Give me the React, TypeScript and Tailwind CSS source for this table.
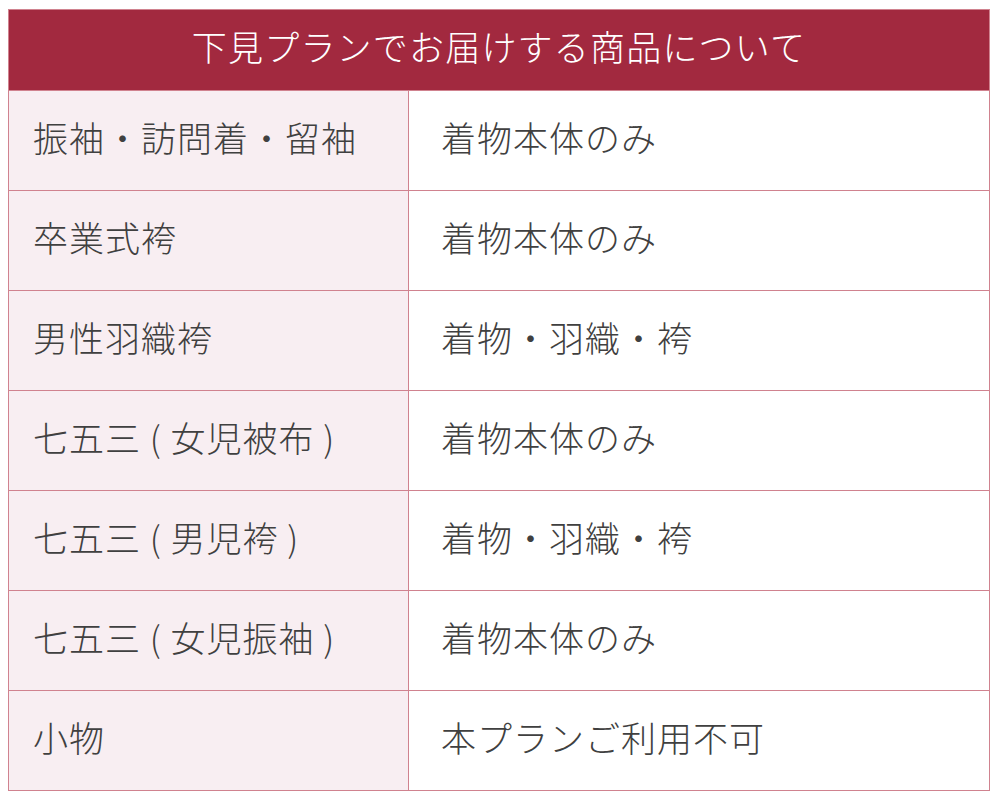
import React from "react";

const rows: [string, string][] = [
  ["振袖・訪問着・留袖", "着物本体のみ"],
  ["卒業式袴", "着物本体のみ"],
  ["男性羽織袴", "着物・羽織・袴"],
  ["七五三 ( 女児被布 )", "着物本体のみ"],
  ["七五三 ( 男児袴 )", "着物・羽織・袴"],
  ["七五三 ( 女児振袖 )", "着物本体のみ"],
  ["小物", "本プランご利用不可"],
];

export default function App() {
  return (
    <div
      className="w-[1000px] h-[800px] bg-white pt-[9px] pl-[8px]"
      style={{ fontFamily: '"Noto Sans CJK JP", "Noto Sans", sans-serif' }}
    >
      <div className="w-[982px] border border-[#d0828f]">
        <div className="h-[80px] bg-[#a2293f] flex items-center justify-center pb-[7px] text-white text-[35px] font-light tracking-[1.2px]">
          下見プランでお届けする商品について
        </div>
        {rows.map(([a, b], i) => (
          <div key={i} className="flex h-[100px] border-t border-[#d0828f]">
            <div className="w-[400px] bg-[#f8eef2] border-r border-[#d0828f] flex items-center pl-[24px] pb-[6px] text-[35px] font-light tracking-[1px] text-[#404040]">
              {a}
            </div>
            <div className="flex-1 flex items-center pl-[32px] pb-[6px] text-[35px] font-light tracking-[1px] text-[#404040]">
              {b}
            </div>
          </div>
        ))}
      </div>
    </div>
  );
}
